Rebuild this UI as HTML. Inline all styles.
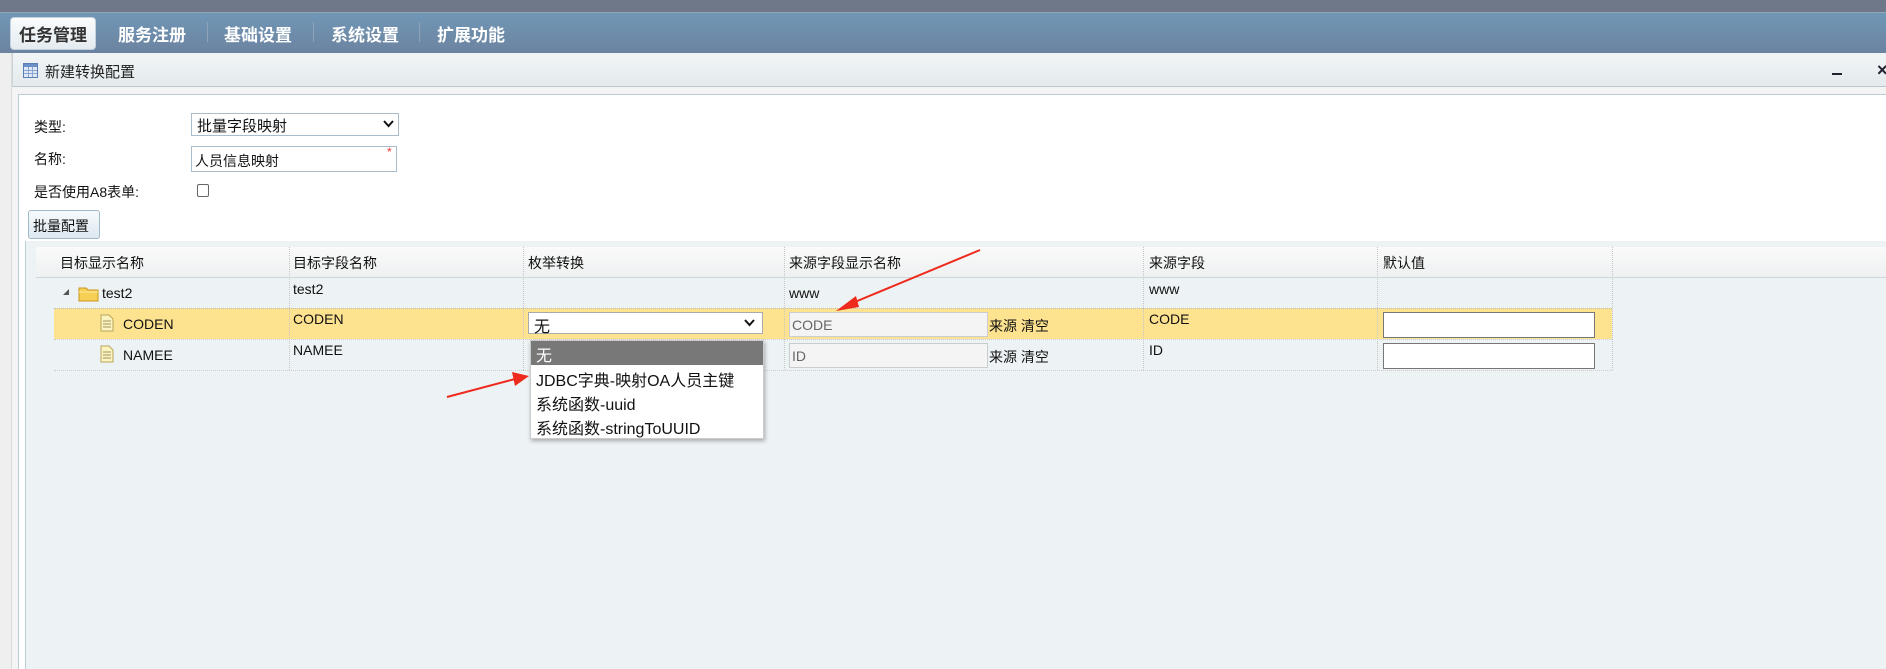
<!DOCTYPE html>
<html><head><meta charset="utf-8"><style>
*{box-sizing:border-box;margin:0;padding:0}
body{width:1886px;height:669px;overflow:hidden;background:#f4f4f4;font-family:"Liberation Sans","Noto Sans CJK SC",sans-serif;position:relative;color:#111}
.abs{position:absolute}
#top{left:0;top:0;width:1886px;height:12px;background:#6e7888}
#nav{left:0;top:12px;width:1886px;height:41px;background:linear-gradient(#7097b6,#6c83a0);border-top:1px solid #8fa5b8}
.tab{position:absolute;top:21px;font-size:17px;font-weight:bold;color:#fff;letter-spacing:0}
.sep{position:absolute;top:22px;width:1px;height:20px;background:#8ea3b8}
#act{left:10px;top:17px;width:86px;height:33px;background:linear-gradient(#fafcfd,#e4ebf0);border-radius:4px;border:1px solid #c5d2dc}
#hdr{left:12px;top:53px;width:1874px;height:34px;background:linear-gradient(#f1f5f6,#e4eaed);border-bottom:1px solid #b6c9cf;border-left:1px solid #c8d4d8}
#content{left:18px;top:94px;width:1868px;height:575px;background:#fff;border-left:1px solid #b9cfd3;border-top:1px solid #b9cfd3}
#grid{left:25px;top:241px;width:1861px;height:428px;background:#edf2f5;border-left:1px solid #b9cfd3}
.lbl{position:absolute;font-size:14px;color:#111}
.cell{position:absolute;font-size:14px;color:#111}
.vl{position:absolute;width:0;border-left:1px dotted #c6c6c6}
</style></head><body>
<div id="top" class="abs"></div>
<div id="nav" class="abs"></div>
<div id="act" class="abs"></div>
<div class="tab" style="left:19px;color:#333">任务管理</div>
<div class="tab" style="left:118px">服务注册</div>
<div class="sep" style="left:207px"></div>
<div class="tab" style="left:224px">基础设置</div>
<div class="sep" style="left:313px"></div>
<div class="tab" style="left:331px">系统设置</div>
<div class="sep" style="left:419px"></div>
<div class="tab" style="left:437px">扩展功能</div>
<div class="abs" style="left:0;top:53px;width:12px;height:616px;background:#efefef;border-right:1px solid #ddd"></div>
<div id="hdr" class="abs"></div>
<svg class="abs" style="left:23px;top:63px" width="15" height="15"><rect x="0.5" y="0.5" width="14" height="14" fill="#dfe9f5" stroke="#5a7fb5"/><rect x="1" y="1" width="13" height="3" fill="#6b8fc7"/><path d="M1 7.5H14M1 10.5H14M5.5 4V14M9.5 4V14" stroke="#8aa6d0"/></svg>
<div class="abs" style="left:45px;top:61px;font-size:15px;color:#222">新建转换配置</div>
<div class="abs" style="left:1832px;top:73px;width:10px;height:2px;background:#223"></div>
<div class="abs" style="left:1877px;top:60px;font-size:18px;font-weight:bold;color:#223">×</div>
<div id="content" class="abs"></div>
<div class="lbl" style="left:34px;top:117px">类型:</div>
<div class="abs" style="left:191px;top:113px;width:208px;height:23px;border:1px solid #a9bccc;background:#fff;font-size:15px;padding:1px 5px">批量字段映射</div>
<svg class="abs" style="left:383px;top:120px" width="11" height="8"><path d="M1 1L5.5 6L10 1" stroke="#111" stroke-width="2" fill="none"/></svg>
<div class="lbl" style="left:34px;top:149px">名称:</div>
<div class="abs" style="left:191px;top:146px;width:206px;height:26px;border:1px solid #a9bccc;background:#fff;font-size:14px;padding:4px 3px">人员信息映射</div>
<div class="abs" style="left:387px;top:145px;color:#e33;font-size:12px">*</div>
<div class="lbl" style="left:34px;top:182px">是否使用A8表单:</div>
<div class="abs" style="left:197px;top:184px;width:12px;height:13px;border:1px solid #666;border-radius:2px;background:#fff"></div>
<div class="abs" style="left:28px;top:210px;width:72px;height:29px;border:1px solid #9fb9cb;border-radius:3px;background:linear-gradient(#f7fafc,#dde8f0);font-size:14px;padding:5px 4px">批量配置</div>
<div id="grid" class="abs"></div>
<div class="abs" style="left:36px;top:247px;width:1850px;height:31px;background:linear-gradient(#fafafa,#eef0f1);border-bottom:1px solid #cfd6da"></div>
<div class="abs" style="left:54px;top:308px;width:1558px;height:31px;background:#fde28f"></div>
<div class="abs" style="left:54px;top:308px;width:1558px;border-top:1px dotted #bbb"></div>
<div class="abs" style="left:54px;top:339px;width:1558px;border-top:1px dotted #ccc"></div>
<div class="abs" style="left:54px;top:370px;width:1558px;border-top:1px dotted #ccc"></div>
<div class="vl" style="left:289px;top:247px;height:123px"></div>
<div class="vl" style="left:523px;top:247px;height:123px"></div>
<div class="vl" style="left:784px;top:247px;height:123px"></div>
<div class="vl" style="left:1143px;top:247px;height:123px"></div>
<div class="vl" style="left:1377px;top:247px;height:123px"></div>
<div class="vl" style="left:1612px;top:247px;height:123px"></div>
<div class="cell" style="left:60px;top:253px">目标显示名称</div>
<div class="cell" style="left:293px;top:253px">目标字段名称</div>
<div class="cell" style="left:528px;top:253px">枚举转换</div>
<div class="cell" style="left:789px;top:253px">来源字段显示名称</div>
<div class="cell" style="left:1149px;top:253px">来源字段</div>
<div class="cell" style="left:1383px;top:253px">默认值</div>
<svg class="abs" style="left:62px;top:288px" width="8" height="8"><path d="M7 1V7H1Z" fill="#555"/></svg>
<svg class="abs" style="left:78px;top:284px" width="22" height="18"><path d="M1 4H8L10 6H20V17H1Z" fill="#f6cf55" stroke="#c7971c"/><path d="M1 8H20" stroke="#fde8a0"/></svg>
<div class="cell" style="left:102px;top:285px">test2</div>
<div class="cell" style="left:293px;top:281px">test2</div>
<div class="cell" style="left:789px;top:285px">www</div>
<div class="cell" style="left:1149px;top:281px">www</div>
<svg class="abs" style="left:100px;top:314px" width="14" height="18"><path d="M1 1H9L13 5V17H1Z" fill="#fbf3c0" stroke="#b9a657"/><path d="M3 7H11M3 10H11M3 13H11" stroke="#a09560"/></svg>
<div class="cell" style="left:123px;top:316px">CODEN</div>
<div class="cell" style="left:293px;top:311px">CODEN</div>
<div class="abs" style="left:528px;top:312px;width:235px;height:22px;border:1px solid #aaa;background:#fff;font-size:16px;padding:0 5px">无</div>
<svg class="abs" style="left:744px;top:319px" width="11" height="8"><path d="M1 1L5.5 6L10 1" stroke="#111" stroke-width="2" fill="none"/></svg>
<div class="abs" style="left:789px;top:312px;width:199px;height:25px;border:1px solid #c9cdd2;background:#f4f4f4;font-size:14px;color:#666;padding:4px 2px">CODE</div>
<div class="cell" style="left:989px;top:316px">来源 清空</div>
<div class="cell" style="left:1149px;top:311px">CODE</div>
<div class="abs" style="left:1383px;top:312px;width:212px;height:26px;border:1px solid #777;background:#fff"></div>
<svg class="abs" style="left:100px;top:345px" width="14" height="18"><path d="M1 1H9L13 5V17H1Z" fill="#fbf3c0" stroke="#b9a657"/><path d="M3 7H11M3 10H11M3 13H11" stroke="#a09560"/></svg>
<div class="cell" style="left:123px;top:347px">NAMEE</div>
<div class="cell" style="left:293px;top:342px">NAMEE</div>
<div class="abs" style="left:789px;top:343px;width:199px;height:25px;border:1px solid #c9cdd2;background:#f4f4f4;font-size:14px;color:#666;padding:4px 2px">ID</div>
<div class="cell" style="left:989px;top:347px">来源 清空</div>
<div class="cell" style="left:1149px;top:342px">ID</div>
<div class="abs" style="left:1383px;top:343px;width:212px;height:26px;border:1px solid #777;background:#fff"></div>
<div class="abs" style="left:530px;top:340px;width:234px;height:99px;background:#fff;border:1px solid #ccc;box-shadow:1px 2px 4px rgba(0,0,0,.3);font-size:16px">
<div style="height:24px;background:#787878;color:#fff;padding:1px 5px">无</div>
<div style="height:24px;padding:2px 5px">JDBC字典-映射OA人员主键</div>
<div style="height:24px;padding:2px 5px">系统函数-uuid</div>
<div style="height:24px;padding:2px 5px">系统函数-stringToUUID</div>
</div>
<svg class="abs" style="left:0;top:0" width="1886" height="669">
<path d="M980 250L850 304" stroke="#ee2a1c" stroke-width="2"/><path d="M836 311L856 296L859 307Z" fill="#ee2a1c"/>
<path d="M447 397L515 379" stroke="#ee2a1c" stroke-width="2"/><path d="M529 376L512 372L515 386Z" fill="#ee2a1c"/>
</svg>
</body></html>
